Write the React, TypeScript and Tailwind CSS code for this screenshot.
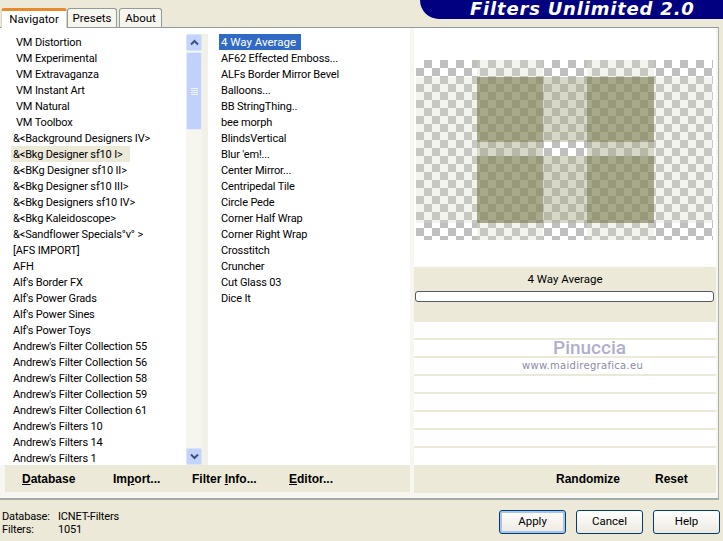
const leftItems = [
  ["VM Distortion", 1], ["VM Experimental", 1], ["VM Extravaganza", 1], ["VM Instant Art", 1], ["VM Natural", 1], ["VM Toolbox", 1],
  ["&<Background Designers IV>", 0], ["&<Bkg Designer sf10 I>", 0], ["&<BKg Designer sf10 II>", 0], ["&<Bkg Designer sf10 III>", 0],
  ["&<Bkg Designers sf10 IV>", 0], ["&<Bkg Kaleidoscope>", 0], ["&<Sandflower Specials°v° >", 0], ["[AFS IMPORT]", 0], ["AFH", 0],
  ["Alf's Border FX", 0], ["Alf's Power Grads", 0], ["Alf's Power Sines", 0], ["Alf's Power Toys", 0],
  ["Andrew's Filter Collection 55", 0], ["Andrew's Filter Collection 56", 0], ["Andrew's Filter Collection 58", 0],
  ["Andrew's Filter Collection 59", 0], ["Andrew's Filter Collection 61", 0], ["Andrew's Filters 10", 0], ["Andrew's Filters 14", 0], ["Andrew's Filters 1", 0],
] as const;

const midItems = [
  "4 Way Average", "AF62 Effected Emboss...", "ALFs Border Mirror Bevel", "Balloons...", "BB StringThing..", "bee morph", "BlindsVertical",
  "Blur 'em!...", "Center Mirror...", "Centripedal Tile", "Circle Pede", "Corner Half Wrap", "Corner Right Wrap", "Crosstitch", "Cruncher", "Cut Glass 03", "Dice It",
];

function Preview() {
  const cells: React.ReactNode[] = [];
  for (let r = 0; r < 23; r++) {
    for (let c = 0; c < 38; c++) {
      if ((r + c) % 2 === 1) cells.push(<rect key={`${r}-${c}`} x={c * 8} y={r * 8} width={8} height={8} fill="#bfbfbf" />);
    }
  }
  const xs = [[0, 61], [61, 66], [127, 44], [171, 67], [238, 59]];
  const ys = [[0, 17], [17, 65], [82, 14], [96, 67], [163, 17]];
  const layer = (xi: number, yi: number) => {
    const outerX = xi === 0 || xi === 4;
    const outerY = yi === 0 || yi === 4;
    const midX = xi === 2;
    const midY = yi === 2;
    if (outerX && outerY) return null;
    if (midX && midY) return null;
    if (outerX || outerY) {
      if (midX || midY) return outerX && midY ? ["#dbdbcb", 0.31] : null;
      return ["#dbdbcb", 0.31];
    }
    if (midX || midY) return ["#b2b292", 0.5];
    return ["#88885f", 0.73];
  };
  return (
    <svg width={297} height={180} viewBox="0 0 297 180" className="block">
      <rect width={297} height={180} fill="#ffffff" />
      {cells}
      {xs.map(([x, w], xi) =>
        ys.map(([y, h], yi) => {
          const l = layer(xi, yi);
          return l ? <rect key={`o${xi}${yi}`} x={x} y={y} width={w} height={h} fill={l[0] as string} opacity={l[1] as number} /> : null;
        })
      )}
    </svg>
  );
}

function Arrow({ up }: { up?: boolean }) {
  return (
    <div className="h-[17px] w-[16px] shrink-0 rounded-[2px] bg-[#c3d3fb] border border-[#d8e3fc] flex items-center justify-center">
      <svg width="9" height="7" viewBox="0 0 9 7">
        <path d={up ? "M1 5.5 4.5 2 8 5.5" : "M1 1.5 4.5 5 8 1.5"} fill="none" stroke="#3d5180" strokeWidth="2" />
      </svg>
    </div>
  );
}

function Scrollbar() {
  return (
    <div className="w-[16px] h-full flex flex-col bg-[#f6f5ee]">
      <Arrow up />
      <div className="h-[78px] mt-[1px] rounded-[2px] bg-[#c1d1fa] border border-[#e3ebfd] flex flex-col items-center justify-center gap-[1px]">
        {[0, 1, 2, 3].map((i) => <div key={i} className="h-[1px] w-[7px] bg-[#eef3fe]" />)}
      </div>
      <div className="flex-1" />
      <Arrow />
    </div>
  );
}

function U({ children }: { children: string }) {
  return <span className="underline underline-offset-1">{children}</span>;
}

function Btn({ children, primary, cls }: { children: string; primary?: boolean; cls: string }) {
  return (
    <div className={`${cls} h-[24px] rounded-[3px] border border-[#003c74] bg-gradient-to-b from-[#ffffff] to-[#ece9de] flex items-center justify-center text-[11.5px] tracking-normal text-black ${primary ? "shadow-[inset_0_0_0_2px_#a9c4ea]" : ""}`}>
      {children}
    </div>
  );
}

export default function App() {
  return (
    <div className="w-[723px] h-[541px] overflow-hidden bg-[#ece9d8] flex flex-col font-['Roboto',sans-serif] text-[11px] tracking-[-0.15px] text-black">
      <div className="h-[27px] flex justify-between items-start shrink-0">
        <div className="flex items-end h-[27px] pl-[1px]">
          <div className="w-[66px] h-[20px] mb-[-1px] z-10 rounded-t-[3px] border-t-[3px] border-[#e68b2c] bg-white border-x border-x-[#d8d5c6] text-[11.5px] tracking-normal flex items-center justify-center">Navigator</div>
          <div className="w-[50px] h-[19px] rounded-t-[3px] border border-[#919b9c] border-b-0 bg-[#f6f5ee] text-[11.5px] tracking-normal flex items-center justify-center pt-[2px]">Presets</div>
          <div className="w-[43px] h-[19px] ml-[2px] rounded-t-[3px] border border-[#919b9c] border-b-0 bg-[#f6f5ee] text-[11.5px] tracking-normal flex items-center justify-center pt-[2px]">About</div>
        </div>
        <div className="w-[303px] h-[19px] bg-[#000080] rounded-bl-[32px] flex items-start justify-start pl-[50px]">
          <span className="font-['DejaVu_Sans',sans-serif] font-bold italic text-[18px] leading-[17px] tracking-[0.8px] text-white whitespace-nowrap">Filters Unlimited 2.0</span>
        </div>
      </div>

      <div className="w-[719px] h-[473px] shrink-0 border-t border-[#919b9c] border-r border-b-2 border-r-[#a9aea9] border-b-[#a3aaa8] bg-[#f7f6f0] flex flex-col">
        <div className="flex flex-1 min-h-0">
          <div className="w-[410px] flex flex-col">
            <div className="h-[437px] flex bg-white pt-[6px]">
              <div className="w-[186px] shrink-0">
                {leftItems.map(([t, vm], i) => (
                  <div key={i} className={`h-[16px] leading-[18px] whitespace-nowrap ${vm ? "pl-[16px]" : i === 7 ? "ml-[11px] pl-[2px] w-[119px] bg-[#ece9d8]" : "pl-[13px]"}`}>
                    {t}
                  </div>
                ))}
              </div>
              <Scrollbar />
              <div className="w-[6px] h-full bg-[#f2f1e8]" />
              <div className="flex-1 pl-[11px]">
                {midItems.map((t, i) => (
                  <div key={t} className={`h-[16px] whitespace-nowrap ${i === 0 ? "leading-[16px] bg-[#316ac5] text-white w-[82px] pl-[2px] text-[11.5px] tracking-normal" : "leading-[18px] pl-[2px]"}`}>{t}</div>
                ))}
              </div>
            </div>
            <div className="h-[28px] ml-[5px] bg-[#ece9d8] flex items-center font-bold text-[12px] tracking-normal font-['Liberation_Sans',sans-serif]">
              <div className="w-[108px] pl-[17px]"><U>D</U>atabase</div>
              <div className="w-[79px]">Im<U>p</U>ort...</div>
              <div className="w-[97px]">Filter <U>I</U>nfo...</div>
              <div><U>E</U>ditor...</div>
            </div>
          </div>

          <div className="w-[302px] ml-[4px] flex flex-col">
            <div className="h-[239px] bg-white pt-[32px] pl-[2px] shrink-0"><Preview /></div>
            <div className="h-[55px] bg-[#ece9d8] shrink-0 flex flex-col">
              <div className="h-[24px] flex items-center justify-center pt-[1px] text-[11.5px] tracking-normal">4 Way Average</div>
              <div className="h-[11px] ml-[1px] mr-[2px] rounded-[3px] border border-[#555a5c] bg-white" />
            </div>
            <div className="relative h-[143px] shrink-0 flex flex-col bg-white">
              {[0, 1, 2, 3, 4, 5, 6].map((i) => (
                <div key={i} className="h-[18px] border-b-2 border-[#ece9d8] bg-white" />
              ))}
              <div className="absolute left-[139px] top-[17px] text-[19px] leading-[18px] font-['Roboto',sans-serif] font-medium tracking-normal text-[#b0b0cc]">Pinuccia</div>
              <div className="absolute left-[108px] top-[38px] text-[10px] leading-[12px] font-['DejaVu_Sans',sans-serif] tracking-[0.3px] text-[#8b8ba6]">www.maidiregrafica.eu</div>
            </div>
            <div className="h-[28px] bg-[#ece9d8] flex items-center font-bold text-[12px] tracking-normal shrink-0 font-['Liberation_Sans',sans-serif]">
              <div className="ml-[142px] w-[99px]">Randomize</div>
              <div>Reset</div>
            </div>
          </div>
        </div>
        <div className="h-[6px] shrink-0" />
      </div>

      <div className="flex-1 flex items-start justify-between">
        <div className="pt-[10px] pl-[2px] leading-[13px]">
          <div className="flex"><span className="w-[56px]">Database:</span><span>ICNET-Filters</span></div>
          <div className="flex"><span className="w-[56px]">Filters:</span><span>1051</span></div>
        </div>
        <div className="flex pt-[10px] pr-[3px] gap-[10px]">
          <Btn primary cls="w-[67px]">Apply</Btn>
          <Btn cls="w-[67px]">Cancel</Btn>
          <Btn cls="w-[67px]">Help</Btn>
        </div>
      </div>
    </div>
  );
}
